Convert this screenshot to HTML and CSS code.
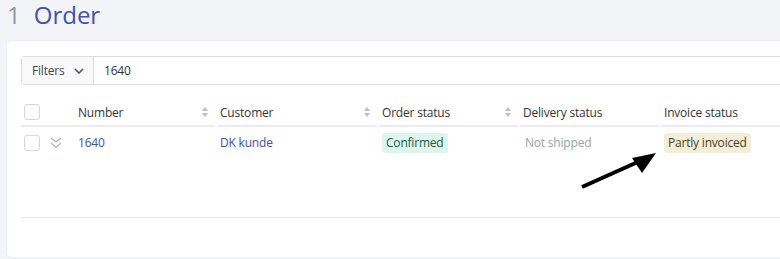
FILE: index.html
```html
<!DOCTYPE html>
<html lang="en">
<head>
  <meta charset="UTF-8">
  <title>Order</title>
  <link rel="stylesheet" href="styles.css">
</head>
<body>
  <div class="page">
    <h1 class="title"><span class="count">1</span>Order</h1>

    <div class="card">
      <div class="filter-bar">
        <button class="filters-btn">Filters
          <svg width="10" height="6" viewBox="0 0 10 6"><path d="M1 1l4 4 4-4" fill="none" stroke="#555" stroke-width="1.6"/></svg>
        </button>
        <div class="filter-value">1640</div>
      </div>

      <div class="grid head">
        <div class="cell first">
          <span class="check"></span>
          <span class="expander-space"></span>
          <span class="label">Number</span>
          <span class="sort"></span>
        </div>
        <div class="cell"><span class="label">Customer</span><span class="sort"></span></div>
        <div class="cell"><span class="label">Order status</span><span class="sort"></span></div>
        <div class="cell"><span class="label">Delivery status</span></div>
        <div class="cell"><span class="label">Invoice status</span></div>
      </div>

      <div class="grid row">
        <div class="cell first">
          <span class="check"></span>
          <svg class="expander" width="12" height="11" viewBox="0 0 12 11"><path d="M1 1l5 4 5-4M1 6l5 4 5-4" fill="none" stroke="#a9b0bd" stroke-width="1.2"/></svg>
          <a class="link">1640</a>
        </div>
        <div class="cell"><a class="link">DK kunde</a></div>
        <div class="cell"><span class="badge green">Confirmed</span></div>
        <div class="cell"><span class="muted">Not shipped</span></div>
        <div class="cell"><span class="badge yellow">Partly invoiced</span></div>
      </div>

      <div class="footer-line"></div>
    </div>

    <svg class="arrow" width="780" height="259" viewBox="0 0 780 259">
      <line x1="582" y1="187" x2="640" y2="161" stroke="#000" stroke-width="4"/>
      <polygon points="656,153 632,158 642,173" fill="#000"/>
    </svg>
  </div>
</body>
</html>
```

FILE: styles.css
```css
body {
  margin: 0;
  background: #f3f4f8;
  font-family: "Open Sans", "Noto Sans", sans-serif;
  font-size: 12px;
  letter-spacing: -0.2px;
  color: #3a3a3a;
  overflow: hidden;
}
.page {
  position: relative;
  width: 780px;
  height: 259px;
}
.title {
  margin: 0;
  padding: 0 0 0 7px;
  height: 40px;
  line-height: 30px;
  font-size: 24px;
  font-weight: normal;
  letter-spacing: 0;
  color: #3f51b5;
}
.count {
  color: #8c97a3;
  margin-right: 13px;
}
.card {
  background: white;
  width: 820px;
  height: 218px;
  box-sizing: border-box;
  padding: 15px 0 0 14px;
  border-radius: 6px;
  border: 1px solid #eceef3;
  margin-left: 6px;
}
.filter-bar {
  display: flex;
  height: 29px;
  border: 1px solid #d9dbe0;
  border-radius: 3px;
  box-sizing: border-box;
}
.filters-btn {
  display: flex;
  align-items: center;
  gap: 9px;
  width: 72px;
  padding: 0 0 0 10px;
  background: #f9f9fb;
  border: none;
  border-right: 1px solid #d9dbe0;
  font-family: inherit;
  font-size: 12px;
  letter-spacing: inherit;
  color: #444;
}
.filter-value {
  display: flex;
  align-items: center;
  padding-left: 10px;
  color: #333;
}
.grid {
  display: grid;
  grid-template-columns: 194px 160px 139px 139px 200px;
  column-gap: 2px;
}
.head {
  margin-top: 14px;
  height: 28px;
}
.head .cell {
  border-bottom: 2px solid #ebebf1;
  color: #333;
}
.cell {
  display: flex;
  align-items: center;
  padding: 0 3px;
  min-width: 0;
}
.row {
  height: 31px;
}
.first {
  padding-left: 3px;
}
.check {
  width: 14px;
  height: 14px;
  border: 1px solid #d6d8de;
  border-radius: 3px;
  flex: none;
}
.expander-space {
  width: 12px;
  margin: 0 16px 0 10px;
}
.expander {
  margin: 0 16px 0 10px;
  flex: none;
}
.label {
  flex: 1;
}
.sort {
  width: 6px;
  height: 10px;
  margin-right: 4px;
  position: relative;
}
.sort::before,
.sort::after {
  content: "";
  position: absolute;
  left: 0;
  border-left: 3px solid transparent;
  border-right: 3px solid transparent;
}
.sort::before {
  top: 0;
  border-bottom: 4px solid #b9bdc6;
}
.sort::after {
  bottom: 0;
  border-top: 4px solid #b9bdc6;
}
.link {
  color: #3d50a9;
}
.muted {
  color: #9aa1a9;
  padding-left: 2px;
}
.badge {
  padding: 3px 4px;
  border-radius: 3px;
  line-height: 14px;
}
.green {
  background: #ddf6eb;
  color: #215a4a;
}
.yellow {
  background: #f4eed9;
  color: #4d3f22;
}
.footer-line {
  margin-top: 59px;
  border-top: 1px solid #e6e6ea;
}
.arrow {
  position: absolute;
  left: 0;
  top: 0;
}
```
